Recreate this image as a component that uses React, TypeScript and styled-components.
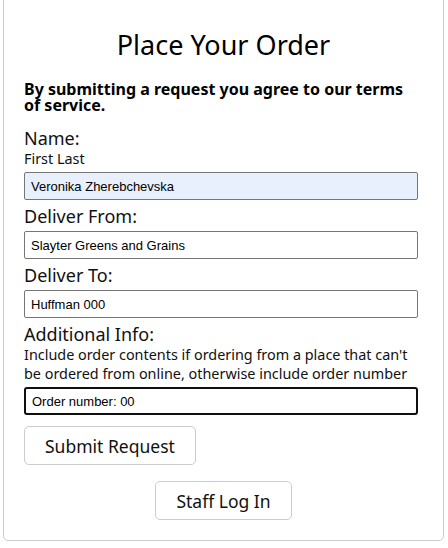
import React from 'react';
import styled, { createGlobalStyle } from 'styled-components';

const GlobalStyle = createGlobalStyle`
  body {
    margin: 0;
    background: #ffffff;
    font-family: 'Noto Sans', 'DejaVu Sans', sans-serif;
    color: #111111;
  }
`;

const App: React.FC = () => {
  return (
    <>
      <GlobalStyle />
      <Card>
        <Title>Place Your Order</Title>
        <Terms>By submitting a request you agree to our terms of service.</Terms>

        <Field>
          <Label htmlFor='name'>Name:</Label>
          <Hint>First Last</Hint>
          <Input id='name' type='text' defaultValue='Veronika Zherebchevska' $filled />
        </Field>

        <Field>
          <Label htmlFor='from'>Deliver From:</Label>
          <Input id='from' type='text' defaultValue='Slayter Greens and Grains' />
        </Field>

        <Field>
          <Label htmlFor='to'>Deliver To:</Label>
          <Input id='to' type='text' defaultValue='Huffman 000' />
        </Field>

        <Field>
          <Label htmlFor='info'>Additional Info:</Label>
          <Hint>
            Include order contents if ordering from a place that can't be ordered from online,
            otherwise include order number
          </Hint>
          <Input id='info' type='text' defaultValue='Order number: 00' $active />
        </Field>

        <Button type='button'>Submit Request</Button>
        <Footer>
          <Button type='button'>Staff Log In</Button>
        </Footer>
      </Card>
    </>
  );
};

export default App;

const Card = styled.div`
  margin: -10px 4px 0 3px;
  height: 551px;
  box-sizing: border-box;
  border: 1px solid #cccccc;
  border-radius: 5px;
  padding: 37px 20px 0 20px;
`;

const Title = styled.h1`
  margin: 0;
  text-align: center;
  font-weight: 400;
  font-size: 27px;
  line-height: 34px;
  color: #000000;
`;

const Terms = styled.h3`
  width: 396px;
  margin: 19px 0 15px;
  font-weight: 700;
  font-size: 16px;
  line-height: 16px;
  color: #000000;
`;

const Field = styled.div`
  display: flex;
  flex-direction: column;
  width: 394px;
  margin-top: 6px;
`;

const Label = styled.label`
  font-size: 18px;
  line-height: 21px;
  color: #111111;
`;

const Hint = styled.span`
  font-size: 14.4px;
  line-height: 19px;
  color: #111111;
`;

const Input = styled.input<{ $filled?: boolean; $active?: boolean }>`
  box-sizing: border-box;
  width: 100%;
  height: 28px;
  margin-top: 4px;
  padding: 0 6px;
  font-family: 'Liberation Sans', Arial, sans-serif;
  font-size: 13px;
  color: #000000;
  background: ${(p) => (p.$filled ? '#e8f0fe' : '#ffffff')};
  border: ${(p) => (p.$active ? '2px solid #101010' : '1px solid #767676')};
  border-radius: ${(p) => (p.$active ? '3px' : '2px')};
  outline: none;
`;

const Button = styled.button`
  margin-top: 11px;
  height: 39px;
  padding: 0 20px;
  background: #ffffff;
  border: 1px solid #cccccc;
  border-radius: 5px;
  font-family: inherit;
  font-size: 17.5px;
  color: #111111;
`;

const Footer = styled.div`
  display: flex;
  justify-content: center;
  margin-top: 5px;
`;
